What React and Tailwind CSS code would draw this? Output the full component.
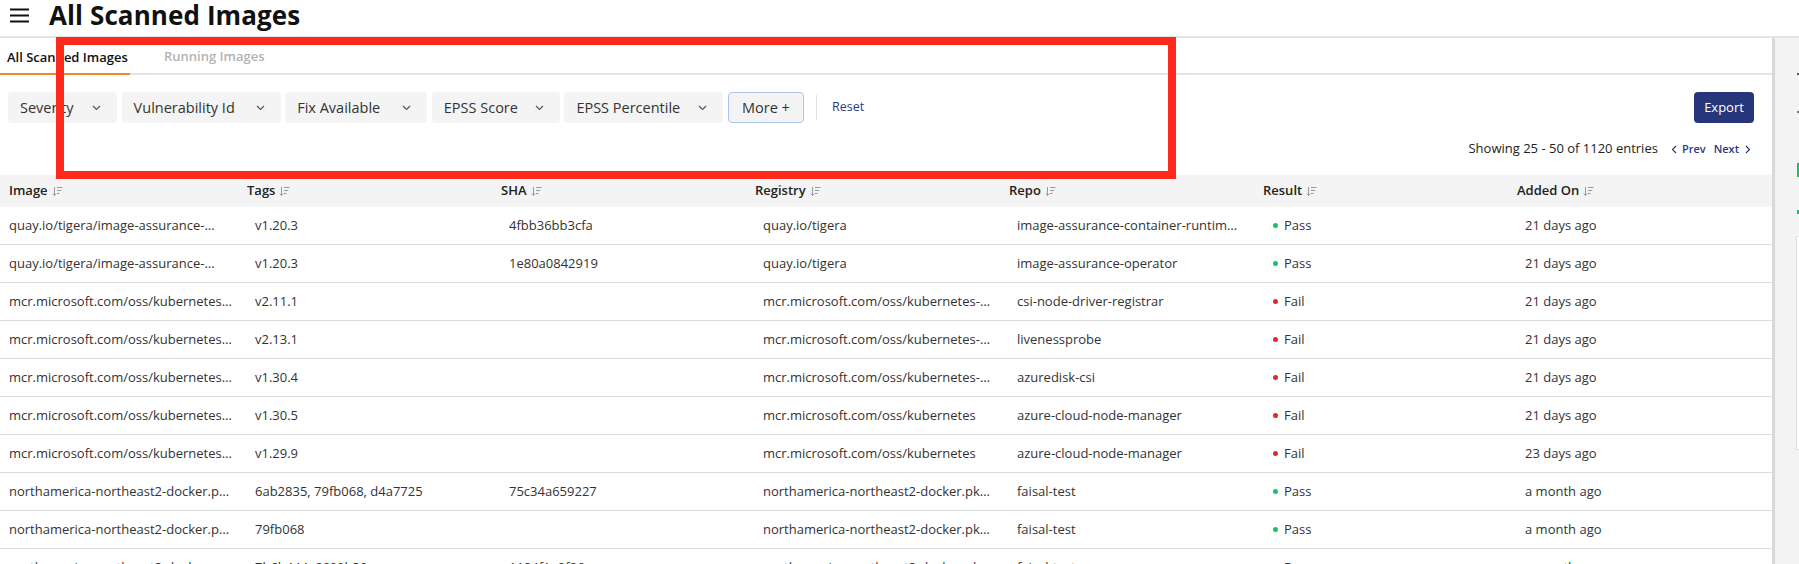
import React from "react";

const SortIcon = () => (
  <svg width="11" height="11" viewBox="0 0 11 11" className="ml-[4px] shrink-0" fill="none" stroke="#9a9a9a" strokeWidth="1">
    <path d="M2.5 1v8.5M0.8 7.6l1.7 1.9 1.7-1.9" />
    <path d="M5 1.5h5.5M5 4.5h4.2M5 7.5h2.6" />
  </svg>
);

const Chevron = ({ className = "" }) => (
  <svg width="9" height="6" viewBox="0 0 9 6" fill="none" stroke="#555" strokeWidth="1.2" className={className}>
    <path d="M1 1l3.5 3.5L8 1" />
  </svg>
);

const filters = [
  { label: "Severity", w: "w-[109px]" },
  { label: "Vulnerability Id", w: "w-[159px]" },
  { label: "Fix Available", w: "w-[142px]" },
  { label: "EPSS Score", w: "w-[128px]" },
  { label: "EPSS Percentile", w: "w-[159px]" },
];

const rows = [
  ["quay.io/tigera/image-assurance-…", "v1.20.3", "4fbb36bb3cfa", "quay.io/tigera", "image-assurance-container-runtim…", "Pass", "21 days ago"],
  ["quay.io/tigera/image-assurance-…", "v1.20.3", "1e80a0842919", "quay.io/tigera", "image-assurance-operator", "Pass", "21 days ago"],
  ["mcr.microsoft.com/oss/kubernetes…", "v2.11.1", "", "mcr.microsoft.com/oss/kubernetes-…", "csi-node-driver-registrar", "Fail", "21 days ago"],
  ["mcr.microsoft.com/oss/kubernetes…", "v2.13.1", "", "mcr.microsoft.com/oss/kubernetes-…", "livenessprobe", "Fail", "21 days ago"],
  ["mcr.microsoft.com/oss/kubernetes…", "v1.30.4", "", "mcr.microsoft.com/oss/kubernetes-…", "azuredisk-csi", "Fail", "21 days ago"],
  ["mcr.microsoft.com/oss/kubernetes…", "v1.30.5", "", "mcr.microsoft.com/oss/kubernetes", "azure-cloud-node-manager", "Fail", "21 days ago"],
  ["mcr.microsoft.com/oss/kubernetes…", "v1.29.9", "", "mcr.microsoft.com/oss/kubernetes", "azure-cloud-node-manager", "Fail", "23 days ago"],
  ["northamerica-northeast2-docker.p…", "6ab2835, 79fb068, d4a7725", "75c34a659227", "northamerica-northeast2-docker.pk…", "faisal-test", "Pass", "a month ago"],
  ["northamerica-northeast2-docker.p…", "79fb068", "", "northamerica-northeast2-docker.pk…", "faisal-test", "Pass", "a month ago"],
  ["northamerica-northeast2-docker.p…", "7b6b444, 6600b30", "1184f1e0f26", "northamerica-northeast2-docker.pk…", "faisal-test", "Pass", "a month ago"],
];

const headers = ["Image", "Tags", "SHA", "Registry", "Repo", "Result", "Added On"];
const gridCols = "grid grid-cols-[239px_254px_254px_254px_254px_254px_263px]";

export default function App() {
  return (
    <div className="relative w-[1799px] h-[564px] overflow-hidden bg-white text-[#333] font-['Open_Sans','Noto_Sans',sans-serif]">
      {/* top header */}
      <header className="h-[38px] border-b-2 border-[#e4e4e4] flex items-center pb-[6px]">
        <svg width="19" height="15" viewBox="0 0 19 15" className="ml-[10px]" stroke="#111" strokeWidth="1.8" fill="none">
          <path d="M0 1.5h19M0 7.5h19M0 13.5h19" />
        </svg>
        <h1 className="ml-[20px] text-[26px] font-bold text-[#111] tracking-[0.1px] leading-[28px]">All Scanned Images</h1>
      </header>

      <div className="flex h-[526px]">
        <main className="w-[1772px] shrink-0">
          {/* tabs */}
          <div className="h-[37px] border-b-2 border-[#e4e4e4] flex items-end">
            <div className="w-[130px] h-full flex items-center pt-[3px] pl-[7px] border-b-2 border-[#f08a24] -mb-[2px] text-[13px] font-semibold text-[#111] whitespace-nowrap">
              All Scanned Images
            </div>
            <div className="h-full flex items-center pt-[3px] ml-[34px] text-[13px] font-semibold text-[#b3b3b3] whitespace-nowrap">
              Running Images
            </div>
          </div>

          {/* filters */}
          <div className="mt-[17px] flex items-center pl-[8px] pr-[18px]">
            <div className="flex items-center gap-[4.6px]">
              {filters.map((f) => (
                <div key={f.label} className={`${f.w} h-[31px] rounded-[4px] bg-[#f4f4f4] flex items-center justify-between pl-[12px] pr-[16px] text-[14.5px] text-[#333] whitespace-nowrap`}>
                  <span>{f.label}</span>
                  <Chevron />
                </div>
              ))}
              <div className="w-[76px] h-[31px] rounded-[4px] bg-[#f4f4f4] border border-[#a9c4f0] flex items-center justify-center text-[14.5px] text-[#333]">
                More +
              </div>
            </div>
            <div className="ml-[12px] w-px h-[25px] bg-[#dedede]" />
            <div className="ml-[15px] text-[12.5px] font-medium text-[#2a3a82]">Reset</div>
            <div className="ml-auto w-[60px] h-[31px] rounded-[4px] bg-[#27357a] text-white text-[13px] font-medium flex items-center justify-center">
              Export
            </div>
          </div>

          {/* pagination */}
          <div className="mt-[17px] h-[18px] flex items-center justify-end pr-[21px]">
            <span className="text-[13px] text-[#222]">Showing 25 - 50 of 1120 entries</span>
            <span className="ml-[13px] flex items-center text-[11px] font-semibold text-[#2a3a82]">
              <svg width="6" height="9" viewBox="0 0 6 9" fill="none" stroke="#2a3a82" strokeWidth="1.2"><path d="M5 1L1.5 4.5 5 8" /></svg>
              <span className="ml-[5px]">Prev</span>
            </span>
            <span className="ml-[8px] flex items-center text-[11px] font-semibold text-[#2a3a82]">
              <span>Next</span>
              <svg width="6" height="9" viewBox="0 0 6 9" fill="none" stroke="#2a3a82" strokeWidth="1.2" className="ml-[6px]"><path d="M1 1l3.5 3.5L1 8" /></svg>
            </span>
          </div>

          {/* table */}
          <div className="mt-[17px]">
            <div className={`${gridCols} h-[32px] bg-[#f4f4f4] items-center`}>
              {headers.map((h, i) => (
                <div key={h} className={`${i === 0 ? "pl-[9px]" : "pl-[8px]"} flex items-center text-[13px] font-semibold text-[#222]`}>
                  {h}
                  <SortIcon />
                </div>
              ))}
            </div>
            {rows.map((r, ri) => (
              <div key={ri} className={`${gridCols} h-[38px] border-b border-[#dcdcdc] items-center text-[13px] text-[#333]`}>
                {r.map((c, ci) => {
                  if (ci === 5) {
                    return (
                      <div key={ci} className="pl-[18px] flex items-center">
                        <span className={`w-[5px] h-[5px] rounded-full ${c === "Pass" ? "bg-[#1cbf6b]" : "bg-[#e4262c]"}`} />
                        <span className="ml-[6px]">{c}</span>
                      </div>
                    );
                  }
                  return (
                    <div key={ci} className={`${ci === 0 ? "pl-[9px]" : "pl-[16px]"} whitespace-nowrap overflow-hidden pr-[2px]`}>
                      {c}
                    </div>
                  );
                })}
              </div>
            ))}
          </div>
        </main>

        {/* right side panel */}
        <aside className="flex-1 border-l-[3px] border-[#d8d8d8] bg-[#f3f3f3] relative overflow-hidden">
          <div className="mt-[35px] ml-[22px] w-[4px] h-[2px] bg-[#555]" />
          <div className="mt-[36px] ml-[22px] w-[4px] h-[2px] bg-[#777]" />
          <div className="mt-[50px] ml-[22px] w-[3px] h-[14px] bg-[#1cbf6b]" />
          <div className="mt-[33px] ml-[22px] w-[3px] h-[4px] bg-[#1cbf6b]" />
          <div className="mt-[22px] ml-[21px] w-[10px] h-[214px] bg-white border border-[#e0e0e0]" />
        </aside>
      </div>

      {/* red annotation rectangle */}
      <div className="absolute left-[56px] top-[37px] w-[1120px] h-[142px] border-[8px] border-[#fe2a1c] pointer-events-none" />
    </div>
  );
}
